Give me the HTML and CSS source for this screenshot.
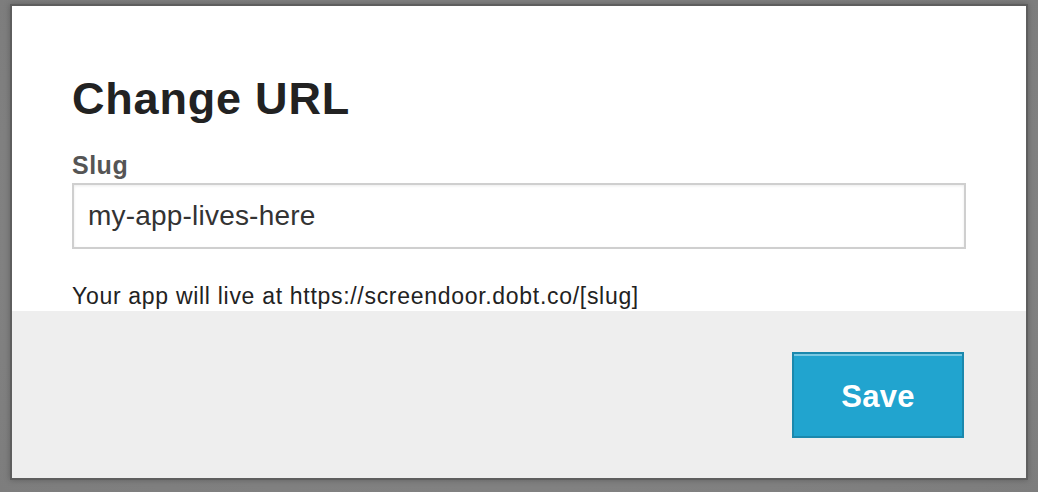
FILE: index.html
```html
<!DOCTYPE html>
<html>
<head>
<meta charset="utf-8">
<link rel="stylesheet" href="styles.css">
</head>
<body>
<div class="modal">
  <div class="modal-body">
    <h1 class="title">Change URL</h1>
    <label class="label" for="slug">Slug</label>
    <input class="input" id="slug" type="text" value="my-app-lives-here">
    <p class="help">Your app will live at https://screendoor.dobt.co/[slug]</p>
  </div>
  <div class="modal-footer">
    <button class="btn-save">Save</button>
  </div>
</div>
</body>
</html>
```
FILE: styles.css
```css
html, body {
  margin: 0;
  padding: 0;
}
body {
  width: 1038px;
  height: 492px;
  background: radial-gradient(ellipse at center, #8a8a8a 0%, #7d7d7d 100%);
  font-family: "Liberation Sans", Arial, Helvetica, sans-serif;
  overflow: hidden;
  padding: 4px 0 0 10px;
  box-sizing: border-box;
}
.modal {
  width: 1014px;
  height: 472px;
  border: 2px solid #5e5e5e;
  display: flex;
  flex-direction: column;
  box-shadow: 0 0 6px rgba(0,0,0,0.25);
}
.modal-body {
  background: #fff;
  height: 305px;
  padding: 0 60px;
  display: flex;
  flex-direction: column;
  box-sizing: border-box;
}
.title {
  margin: 69px 0 0 0;
  font-size: 45px;
  line-height: 48px;
  font-weight: bold;
  color: #222;
  letter-spacing: 0.8px;
}
.label {
  margin-top: 28px;
  font-size: 25px;
  line-height: 28px;
  font-weight: bold;
  color: #555;
  letter-spacing: 0.5px;
}
.input {
  margin-top: 4px;
  height: 66px;
  width: 100%;
  box-sizing: border-box;
  border: 2px solid #cfcfcf;
  box-shadow: inset 0 1px 3px rgba(0,0,0,0.08);
  padding: 0 14px;
  font-family: "Liberation Sans", Arial, sans-serif;
  font-size: 28px;
  letter-spacing: 0.2px;
  color: #333;
  outline: none;
  background: #fff;
}
.help {
  margin: 34px 0 0 0;
  font-size: 23px;
  line-height: 26px;
  color: #222;
  letter-spacing: 0.7px;
}
.modal-footer {
  flex: 1;
  background: #eeeeee;
  display: flex;
  justify-content: flex-end;
  align-items: flex-start;
  padding: 41px 62px 0 0;
}
.btn-save {
  width: 172px;
  height: 86px;
  background: #21a4cf;
  border: 2px solid #1b88ad;
  box-shadow: inset 0 2px 0 rgba(255,255,255,0.4);
  color: #fff;
  font-family: "Liberation Sans", Arial, sans-serif;
  font-weight: bold;
  font-size: 31px;
  letter-spacing: 0.3px;
  padding: 4px 0 0 0;
  cursor: pointer;
}
```
